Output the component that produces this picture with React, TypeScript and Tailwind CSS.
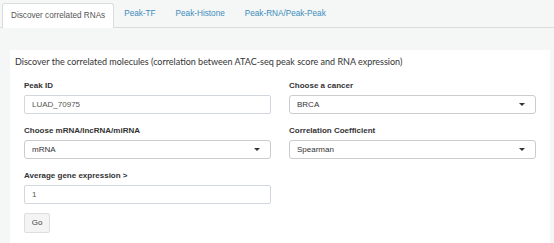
import React from "react";

const Caret = () => (
  <svg width="6" height="3" viewBox="0 0 6 3" className="shrink-0">
    <path d="M0 0 L6 0 L3 3 Z" fill="#333" />
  </svg>
);

const Label = ({ children }: { children: React.ReactNode }) => (
  <div className="h-[12px] text-[8px] font-bold leading-[12px] text-[#333]">{children}</div>
);

const TextBox = ({ value }: { value: string }) => (
  <div className="mt-[3px] flex h-[19px] items-center rounded-[2px] border border-[#d2d6de] bg-white pl-[7px] text-[8px] text-[#555]">
    {value}
  </div>
);

const SelectBox = ({ value }: { value: string }) => (
  <div className="mt-[3px] flex h-[19px] items-center justify-between rounded-[3px] border border-[#ccc] bg-white pl-[7px] pr-[10px] text-[8px] text-[#333]">
    <span>{value}</span>
    <Caret />
  </div>
);

export default function App() {
  return (
    <div
      className="h-[243px] w-[554px] overflow-hidden bg-[#f5f6f6]"
      style={{ fontFamily: '"Liberation Sans", Arial, sans-serif' }}
    >
      <div className="flex h-[28px] items-end border-b border-[#dcdcdc] pl-[2px]">
        <div className="-mb-px flex h-[25px] items-center rounded-t-[3px] border border-b-0 border-[#dcdcdc] bg-white px-[8px] text-[8.2px] text-[#555]">
          Discover correlated RNAs
        </div>
        <div className="flex h-[25px] items-center px-[10px] text-[8.2px] text-[#3c8dbc]">Peak-TF</div>
        <div className="flex h-[25px] items-center px-[10px] text-[8.2px] text-[#3c8dbc]">Peak-Histone</div>
        <div className="flex h-[25px] items-center px-[10px] text-[8.2px] text-[#3c8dbc]">Peak-RNA/Peak-Peak</div>
      </div>
      <div className="ml-[10px] mr-[4px] mt-[22px] h-[200px] bg-white pl-[5px] pt-[5px]">
        <div
          className="h-[14px] text-[9px] leading-[14px] text-[#333]"
          style={{ fontFamily: '"Lato", "Noto Sans", sans-serif' }}
        >
          Discover the correlated molecules (correlation between ATAC-seq peak score and RNA expression)
        </div>
        <div className="ml-[9px] mt-[11px] grid w-[512px] grid-cols-2 gap-x-[18px]">
          <div>
            <Label>Peak ID</Label>
            <TextBox value="LUAD_70975" />
          </div>
          <div>
            <Label>Choose a cancer</Label>
            <SelectBox value="BRCA" />
          </div>
          <div className="mt-[11px]">
            <Label>Choose mRNA/lncRNA/miRNA</Label>
            <SelectBox value="mRNA" />
          </div>
          <div className="mt-[11px]">
            <Label>Correlation Coefficient</Label>
            <SelectBox value="Spearman" />
          </div>
          <div className="mt-[11px]">
            <Label>Average gene expression &gt;</Label>
            <TextBox value="1" />
          </div>
        </div>
        <div className="ml-[9px] mt-[9px] flex h-[20px] w-[26px] items-center justify-center rounded-[2px] border border-[#ddd] bg-[#f4f4f4] text-[8px] text-[#444]">
          Go
        </div>
      </div>
    </div>
  );
}
